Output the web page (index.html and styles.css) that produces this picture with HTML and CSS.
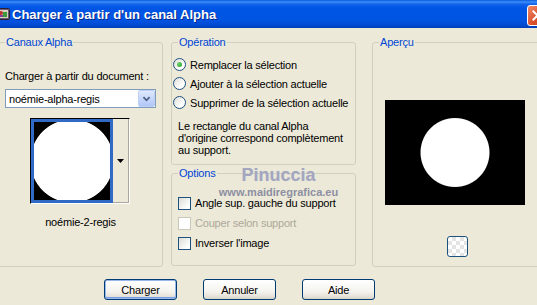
FILE: index.html
```html
<!DOCTYPE html>
<html lang="fr">
<head>
    <meta charset="UTF-8">
    <title>Charger à partir d'un canal Alpha</title>
    <link rel="stylesheet" href="styles.css">
</head>
<body>
    <div class="window">
        <div class="titlebar">
            <svg class="app-icon" viewBox="0 0 14 14">
                <rect x="0.5" y="1.5" width="13" height="11" rx="1" fill="#6a5a7a" stroke="#2a2030"/>
                <rect x="2" y="3" width="10" height="8" fill="#d8d0c0"/>
                <circle cx="5" cy="6" r="2" fill="#c0302a"/>
                <rect x="7" y="5" width="4" height="5" fill="#3a9a3a"/>
                <rect x="3" y="8" width="4" height="2" fill="#8040a0"/>
            </svg>
            <span class="title">Charger à partir d'un canal Alpha</span>
            <span class="close-btn">
                <svg viewBox="0 0 21 21"><path d="M6 6 L15 15 M15 6 L6 15" stroke="#fff" stroke-width="2.2" stroke-linecap="square"/></svg>
            </span>
        </div>

        <div class="dialog">
            <div class="groups">
                <fieldset class="group group-channels">
                    <legend>Canaux Alpha</legend>
                    <div class="field-label">Charger à partir du document :</div>
                    <div class="combo">
                        <span class="combo-text">noémie-alpha-regis</span>
                        <span class="combo-btn">
                            <svg viewBox="0 0 17 17"><path d="M5 7 L8.5 10.5 L12 7" fill="none" stroke="#4d6185" stroke-width="2"/></svg>
                        </span>
                    </div>
                    <div class="thumb-picker">
                        <div class="thumb-frame"><div class="thumb"></div></div>
                        <div class="thumb-arrow">
                            <svg viewBox="0 0 7 4"><path d="M0 0 H7 L3.5 4 Z" fill="#000"/></svg>
                        </div>
                    </div>
                    <div class="thumb-name">noémie-2-regis</div>
                </fieldset>

                <div class="middle">
                    <fieldset class="group group-op">
                        <legend>Opération</legend>
                        <div class="radios">
                            <label class="row"><span class="radio checked"></span>Remplacer la sélection</label>
                            <label class="row"><span class="radio"></span>Ajouter à la sélection actuelle</label>
                            <label class="row"><span class="radio"></span>Supprimer de la sélection actuelle</label>
                        </div>
                        <p class="note">Le rectangle du canal Alpha<br>d'origine correspond complètement<br>au support.</p>
                    </fieldset>

                    <fieldset class="group group-options">
                        <legend>Options</legend>
                        <div class="checks">
                            <label class="row"><span class="check"></span>Angle sup. gauche du support</label>
                            <label class="row disabled"><span class="check"></span>Couper selon support</label>
                            <label class="row"><span class="check"></span>Inverser l'image</label>
                        </div>
                    </fieldset>

                    <div class="watermark">
                        <div class="wm-name">Pinuccia</div>
                        <div class="wm-site">www.maidiregrafica.eu</div>
                    </div>
                </div>

                <fieldset class="group group-preview">
                    <legend>Aperçu</legend>
                    <div class="preview"></div>
                    <div class="bg-btn"></div>
                </fieldset>
            </div>

            <div class="buttons">
                <button type="button" class="btn default">Charger</button>
                <button type="button" class="btn">Annuler</button>
                <button type="button" class="btn">Aide</button>
            </div>
        </div>
    </div>
</body>
</html>
```

FILE: styles.css
```css
body {
    margin: 0;
    background-color: #ece9d8;
    font-family: "Liberation Sans", Arial, sans-serif;
    font-size: 11px;
    letter-spacing: -0.2px;
    color: #000;
    overflow: hidden;
}

.window {
    width: 537px;
    height: 305px;
    overflow: hidden;
}

/* title bar */
.titlebar {
    height: 28px;
    display: flex;
    align-items: center;
    background: linear-gradient(#0a5ae0 0, #3d8ff8 2px, #1463ec 4px, #0055e5 8px, #0054e2 20px, #004bd2 25px, #003fb5 28px);
}

.app-icon {
    width: 14px;
    height: 14px;
    margin-left: -4px;
}

.title {
    margin-left: 2px;
    font-size: 13px;
    font-weight: bold;
    letter-spacing: 0;
    color: #fff;
    text-shadow: 1px 1px #0b2a8a;
}

.close-btn {
    margin-left: auto;
    margin-right: -11px;
    margin-top: 2px;
    width: 21px;
    height: 21px;
    box-sizing: border-box;
    border: 1px solid #fff;
    border-radius: 3px;
    background: linear-gradient(135deg, #f08a68, #d9522e 55%, #c2401f);
}

.close-btn svg {
    display: block;
    width: 19px;
    height: 19px;
}

/* groups */
.dialog {
    padding-top: 8px;
}

.groups {
    display: flex;
    align-items: flex-start;
    margin-left: -2px;
}

.group {
    margin: 0;
    padding: 0;
    min-width: 0;
    box-sizing: border-box;
    border: 1px solid #d0d0bf;
    border-radius: 3px;
}

.group legend {
    color: #0046d5;
    line-height: 13px;
    padding: 0 1px;
    margin-left: 6px;
}

.group-channels {
    width: 165px;
    height: 231px;
    flex-shrink: 0;
}

.middle {
    width: 185px;
    margin-left: 8px;
    flex-shrink: 0;
    position: relative;
}

.group-op {
    height: 129px;
}

.group-options {
    height: 99px;
    margin-top: 2px;
}

.group-preview {
    width: 180px;
    height: 231px;
    margin-left: 16px;
    flex-shrink: 0;
}

/* canaux alpha */
.field-label {
    margin: 21px 0 0 6px;
    line-height: 13px;
}

.combo {
    margin: 6px 6px 0 6px;
    height: 19px;
    box-sizing: border-box;
    border: 1px solid #7f9db9;
    background-color: #fff;
    display: flex;
    align-items: center;
}

.combo-text {
    flex: 1;
    padding-left: 3px;
}

.combo-btn {
    width: 17px;
    height: 17px;
    box-sizing: border-box;
    border: 1px solid #bcd0f8;
    border-radius: 2px;
    background: linear-gradient(#dfe9fe, #c2d4fb 60%, #b2c7f6);
}

.combo-btn svg {
    display: block;
    width: 15px;
    height: 15px;
}

.thumb-picker {
    margin: 10px 0 0 31px;
    width: 100px;
    height: 86px;
    box-sizing: border-box;
    border: 1px solid;
    border-color: #000 #fff #fff #000;
    display: flex;
}

.thumb-frame {
    width: 82px;
    border: 3px solid #316ac5;
    box-sizing: border-box;
}

.thumb {
    height: 100%;
    background: radial-gradient(circle 42px at 50% 50%, #fff 98%, #000 100%);
}

.thumb-arrow {
    flex: 1;
    border-right: 1px solid #aca899;
    border-bottom: 1px solid #aca899;
    display: flex;
    align-items: center;
    justify-content: center;
}

.thumb-arrow svg {
    width: 7px;
    height: 4px;
}

.thumb-name {
    margin-top: 12px;
    text-align: center;
    line-height: 13px;
}

/* operation / options */
.radios {
    padding-top: 6px;
}

.row {
    display: flex;
    align-items: center;
    height: 19px;
    gap: 4px;
    white-space: nowrap;
}

.radios .row {
    margin-left: 1px;
}

.radio {
    width: 13px;
    height: 13px;
    flex-shrink: 0;
    box-sizing: border-box;
    border: 1px solid #1c5180;
    border-radius: 50%;
    background: linear-gradient(135deg, #dcdcd6, #fff 70%);
    display: flex;
    align-items: center;
    justify-content: center;
}

.radio.checked::after {
    content: "";
    width: 5px;
    height: 5px;
    border-radius: 50%;
    background: radial-gradient(circle at 35% 35%, #6fd26f, #21a121);
}

.note {
    margin: 8px 0 0 6px;
    line-height: 12px;
}

.checks {
    padding-top: 13px;
}

.checks .row {
    height: 20px;
    margin-left: 6px;
}

.check {
    width: 13px;
    height: 13px;
    flex-shrink: 0;
    box-sizing: border-box;
    border: 1px solid #1c5180;
    background: linear-gradient(135deg, #dcdcd6, #fff 80%);
}

.row.disabled {
    color: #aca899;
}

.row.disabled .check {
    border-color: #cac8bb;
    background: #fff;
}

.watermark {
    position: absolute;
    left: 47px;
    top: 128px;
    width: 121px;
    text-align: center;
    letter-spacing: 0;
    pointer-events: none;
}

.wm-name {
    font-size: 18px;
    font-weight: bold;
    line-height: 22px;
    color: #a3a6bd;
    text-shadow: 0 0 1px #d8d8e4;
}

.wm-site {
    font-weight: bold;
    line-height: 13px;
    color: #8d8fa2;
}

/* apercu */
.preview {
    margin: 51px 0 0 12px;
    width: 140px;
    height: 105px;
    background: radial-gradient(circle 35px at 50% 50%, #fff 97%, #000 100%);
}

.bg-btn {
    margin: 31px 0 0 74px;
    width: 21px;
    height: 21px;
    box-sizing: border-box;
    border: 1px solid #1c5180;
    border-radius: 3px;
    background-color: #fff;
    background-image: linear-gradient(45deg, #e4e4e4 25%, transparent 25%, transparent 75%, #e4e4e4 75%),
                      linear-gradient(45deg, #e4e4e4 25%, transparent 25%, transparent 75%, #e4e4e4 75%);
    background-size: 8px 8px;
    background-position: 0 0, 4px 4px;
}

/* buttons */
.buttons {
    display: flex;
    gap: 26px;
    margin-top: 12px;
    padding-left: 104px;
}

.btn {
    width: 73px;
    height: 21px;
    padding: 0;
    font-family: inherit;
    font-size: 11px;
    letter-spacing: inherit;
    color: #000;
    border: 1px solid #003c74;
    border-radius: 3px;
    background: linear-gradient(#fff, #f4f3ee 60%, #e3e0d6 90%, #d6d0c5);
}

.btn.default {
    box-shadow: inset 0 0 0 1px #98b8ea, inset 0 -1px 0 1px #7a9ee6;
}
```
